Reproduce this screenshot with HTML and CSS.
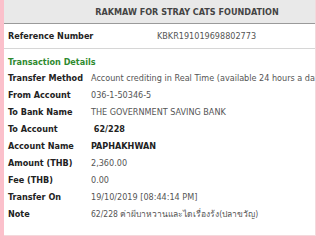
FILE: index.html
```html
<!DOCTYPE html>
<html lang="en">
<head>
    <meta charset="UTF-8">
    <title>Transaction</title>
    <link rel="stylesheet" href="styles.css">
</head>
<body>
    <div class="panel">
        <div class="sheet">
            <div class="head">RAKMAW FOR STRAY CATS FOUNDATION</div>
            <div class="ref">
                <span class="ref-label">Reference Number</span>
                <span class="ref-value">KBKR191019698802773</span>
            </div>
            <div class="section">Transaction Details</div>
            <div class="rows">
                <div class="label">Transfer Method</div>
                <div class="value">Account crediting in Real Time (available 24 hours a day)</div>
                <div class="label">From Account</div>
                <div class="value">036-1-50346-5</div>
                <div class="label">To Bank Name</div>
                <div class="value">THE GOVERNMENT SAVING BANK</div>
                <div class="label">To Account</div>
                <div class="value strong">&nbsp;62/228</div>
                <div class="label">Account Name</div>
                <div class="value strong">PAPHAKHWAN</div>
                <div class="label">Amount (THB)</div>
                <div class="value">2,360.00</div>
                <div class="label">Fee (THB)</div>
                <div class="value">0.00</div>
                <div class="label">Transfer On</div>
                <div class="value">19/10/2019 [08:44:14 PM]</div>
                <div class="label">Note</div>
                <div class="value note">62/228 ค่าผีบาหวานและไดเรื่องร้ง(ปลาขวัญ)</div>
            </div>
        </div>
    </div>
</body>
</html>
```

FILE: styles.css
```css
body {
    margin: 0;
    background-color: #fbc0cb;
    font-family: 'DejaVu Sans Condensed', 'DejaVu Sans', sans-serif;
    font-size: 9px;
    color: #222;
}
.panel {
    margin-left: 4px;
    width: 311px;
    height: 235px;
    background-color: #fff;
    border-right: 1px solid #f4d8dc;
    border-bottom: 1px solid #f4d8dc;
    overflow: hidden;
}
.sheet {
    width: 366px;
}
.head {
    height: 24px;
    line-height: 24px;
    background-color: #e9e9e9;
    border-bottom: 1px solid #9a9a9a;
    text-align: center;
    font-weight: bold;
    color: #444;
    box-sizing: border-box;
}
.ref {
    display: flex;
    height: 24px;
    line-height: 24px;
    padding-left: 4px;
    border-bottom: 1px solid #d6d6d6;
}
.ref-label {
    width: 149px;
    font-weight: bold;
}
.ref-value {
    color: #555;
}
.section {
    padding: 6px 4px 0;
    height: 15px;
    line-height: 14px;
    color: #2f8a2f;
    font-weight: bold;
}
.rows {
    display: grid;
    grid-template-columns: 83px 1fr;
    grid-auto-rows: 17px;
    padding-left: 4px;
    line-height: 17px;
}
.label {
    font-weight: bold;
    white-space: nowrap;
}
.value {
    color: #555;
    white-space: nowrap;
}
.value.strong {
    font-weight: bold;
    color: #222;
}
.note {
    font-size: 8.5px;
}
```
